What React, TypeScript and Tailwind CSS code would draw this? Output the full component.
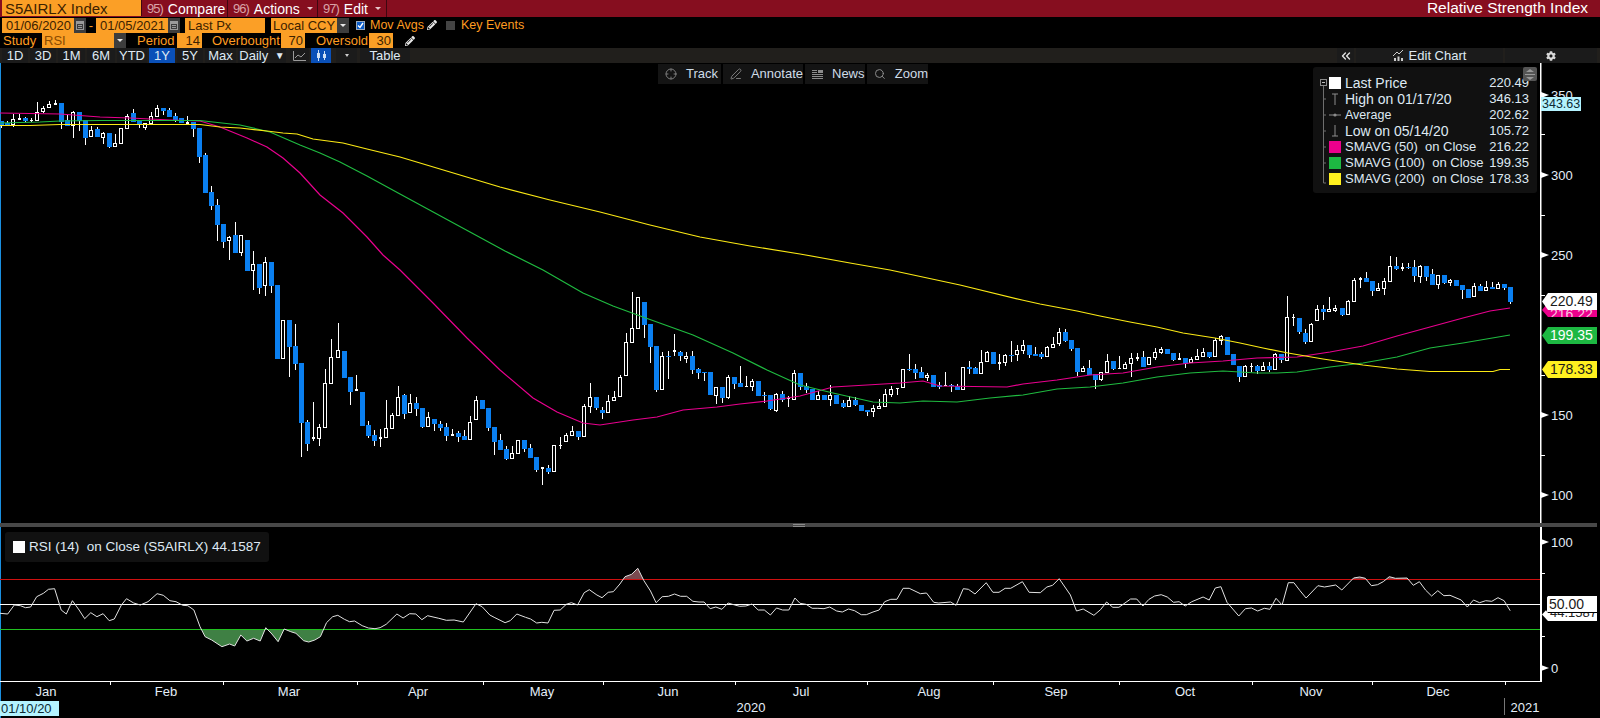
import React from "react";
import { Crosshair, Search, PenLine, ChevronsLeft } from "lucide-react";
import { FaCog, FaPencilAlt } from "react-icons/fa";

type C = number[];
const A: C[] = [[0,93,105,93,113],[0,99,105,93,105],[1,88,105,72,110],[1,84,90,72,90],[0,84,93,81,95],[1,90,92,84,96],[1,65,93,36,93],[1,54,66,48,69],[1,42,53,33,53],[1,40,45,30,45],[0,39,96,39,117],[0,90,108,75,108],[1,66,107,63,144],[0,66,93,66,123],[0,90,144,90,165],[1,120,140,108,140],[0,117,141,111,141],[1,129,144,126,162],[0,129,171,129,174],[1,160,170,132,170],[1,114,161,114,161],[1,78,116,72,116],[0,69,96,57,96],[0,93,102,93,114],[1,100,114,100,120],[1,78,102,66,102],[1,54,81,45,81],[0,54,63,54,75],[0,60,81,54,81],[0,78,93,69,96],[0,84,99,84,99],[1,96,102,78,102],[0,96,117,96,141],[0,114,201,114,219],[0,195,309,189,309],[0,306,348,288,360],[0,345,405,327,453],[0,402,456,402,474],[1,441,453,438,510],[0,435,489,396,489],[1,435,489,435,498],[0,450,543,450,543],[1,522,543,483,600],[0,522,594,522,612],[1,516,588,501,618],[0,516,588,516,609],[0,585,807,585,807],[1,690,807,690,807],[0,690,771,690,861],[0,768,822,702,840],[0,819,999,819,1100],[0,996,1062,990,1083],[1,1041,1047,936,1053],[1,1011,1047,1002,1068],[1,879,1014,837,1014],[1,801,882,747,882],[1,780,804,699,804],[0,783,864,783,864],[0,861,906,861,945],[1,897,903,855,903],[0,906,1008,906,1008],[0,1005,1038,993,1044],[0,1035,1053,1020,1068],[1,1041,1047,1017,1071],[1,1014,1044,930,1044],[1,975,1017,969,1017],[1,921,977,888,977]];
const B: C[] = [[0,375,432,372,447],[1,400,428,372,428],[0,399,417,381,438],[0,414,471,414,474],[1,442,470,426,470],[0,447,462,447,483],[0,462,474,453,483],[0,471,498,459,513],[1,492,497,477,497],[0,489,501,483,516],[0,498,510,480,510],[1,456,510,438,510],[1,390,450,378,450],[0,390,417,390,417],[0,414,474,414,483],[0,471,516,471,555],[0,510,540,492,540],[0,537,567,528,570],[1,549,567,528,567],[1,510,552,510,552],[0,510,537,510,546],[0,534,564,522,564],[0,561,600,561,606],[1,591,598,591,645],[0,594,606,585,612],[1,525,606,525,606],[1,524,528,501,537],[1,495,516,489,516],[1,484,498,468,498],[0,483,501,483,510],[1,408,501,402,501],[1,381,411,339,429],[0,381,414,381,420],[0,420,429,411,447],[1,393,429,375,429],[1,381,393,363,393],[1,321,381,315,381],[1,216,318,189,318],[1,174,219,66,219],[1,81,177,81,177],[0,96,165,96,204],[0,162,231,162,279],[0,228,360,228,366],[1,258,360,246,360],[0,258,261,243,327],[1,240,246,192,258],[0,246,258,243,273],[1,258,267,246,279],[0,258,300,243,312],[0,297,309,294,327],[0,306,309,306,333],[0,306,375,306,375],[1,351,378,351,402],[0,351,384,351,399],[1,321,384,315,387],[0,321,342,321,357],[0,339,351,288,351],[1,348,351,318,351],[1,333,351,327,363],[0,333,378,333,378],[0,375,378,366,399],[0,375,417,375,420],[1,372,423,369,426],[0,372,390,363,396],[1,384,387,378,411],[1,309,390,300,390],[0,309,351,309,360],[0,348,360,339,369],[0,357,390,357,390],[1,375,390,363,390],[0,375,390,375,390],[1,375,390,345,408],[0,375,402,375,402],[0,399,411,390,414],[1,390,411,378,411],[0,390,405,381,408],[0,405,423,405,423],[0,420,426,420,438],[1,414,426,405,441],[1,408,416,387,416],[1,372,411,357,411],[1,357,375,348,381],[1,354,358,354,375]];
const D: C[] = [[1,208,263,208,263],[0,207,210,162,213],[0,207,219,192,237],[0,216,234,201,234],[1,225,233,219,243],[0,225,261,225,261],[0,256,260,246,267],[1,255,258,216,258],[0,256,259,252,276],[0,258,270,252,270],[1,202,270,202,270],[0,201,207,183,222],[0,204,222,201,222],[1,186,222,150,222],[1,156,186,153,186],[0,156,192,156,192],[1,186,192,162,210],[1,165,189,162,198],[0,165,168,123,186],[1,150,165,135,183],[1,135,153,120,162],[0,135,165,135,174],[0,162,168,141,168],[0,162,171,156,177],[1,141,171,138,171],[1,132,143,111,143],[1,96,132,84,138],[0,96,123,87,126],[0,120,147,120,153],[0,144,216,144,228],[1,204,215,198,215],[0,204,225,180,225],[0,222,240,222,267],[1,217,240,217,243],[1,183,218,162,218],[0,183,207,183,210],[1,204,207,168,207],[1,192,207,186,207],[1,174,193,159,231],[1,171,177,159,183],[0,171,201,153,201],[1,171,195,171,195],[1,156,174,144,180],[1,147,159,141,162],[0,147,162,147,162],[0,159,180,159,183],[1,175,180,159,180],[0,174,192,174,204],[1,178,189,171,189],[1,168,180,147,180],[1,156,171,144,171],[0,156,171,156,174],[1,120,171,114,171],[1,108,123,105,135],[0,111,165,111,165],[0,162,195,162,195],[0,198,231,198,246],[1,198,231,195,231],[1,198,201,189,216],[0,198,213,195,222],[1,198,213,186,213],[0,198,210,186,216],[1,162,210,159,210],[0,162,180,162,189]];
const E: C[] = [[1,232,362,168,362],[1,231,235,222,258],[0,234,276,234,282],[0,279,306,267,312],[1,252,306,250,306],[1,207,243,195,243],[0,207,216,195,240],[1,207,216,171,216],[1,204,213,195,216],[0,204,225,204,228],[1,183,225,180,225],[1,120,186,114,186],[1,114,121,111,144],[0,114,126,96,126],[0,123,153,123,168],[1,144,152,129,152],[1,123,147,114,165],[1,78,126,48,126],[0,78,87,51,90],[1,81,88,69,93],[0,81,84,69,87],[0,81,108,60,126],[1,78,110,75,129],[0,78,111,78,123],[0,102,135,87,135],[1,105,135,105,147],[0,105,129,105,132],[1,120,129,117,138],[0,120,138,120,138],[0,135,150,135,177],[0,147,174,147,174],[1,138,170,129,171],[0,138,153,132,153],[1,141,152,123,152],[0,141,147,126,147],[1,132,147,126,147],[0,132,144,132,150],[0,141,186,141,192]];

const candles = [
  ...A.map((c) => [90, ...c]),
  ...B.map((c) => [270, ...c]),
  ...D.map((c) => [300, ...c]),
  ...E.map((c) => [240, ...c]),
].map(([o, k, bt, bb, wt, wb], i) => ({
  cx: 1.33 + 6.012 * i,
  k,
  bt: Math.round(o + bt / 3),
  bb: Math.round(o + bb / 3),
  wt: Math.round(o + wt / 3),
  wb: Math.round(o + wb / 3),
}));

const sma200 = "0,125.5 30,125.5 60,124.5 200,124.5 220,127 240,128 267,131 283,133 297,134 313,139 343,143 367,149 400,157 450,172 500,187 550,200 600,212 650,225 700,237 750,246 800,254 850,263 890,270 960,285 1022,300 1040,304 1077,311 1100,316 1130,322 1157,327 1183,333 1215,338 1240,343 1263,348 1288,353 1323,359 1363,365 1397,369 1430,371.5 1493,371.5 1500,369.5 1510,369.5";
const sma100 = "0,123 40,122 60,121 100,120.5 200,120.5 213,122 240,125 270,132 300,145 320,153 340,162 367,176 400,194 435,213 470,232 505,251 543,270 583,293 613,306 643,317 693,335 733,353 767,370 800,385 833,393 873,402 900,403 923,401 957,402 990,398 1023,395 1057,389 1090,387 1123,383 1157,377 1190,373 1223,371 1257,373 1277,373 1297,372 1330,367 1363,363 1397,357 1430,348 1463,343 1510,335";
const sma50 = "0,113 60,114 100,117 130,118 170,120 200,121 220,127 247,138 267,147 283,158 300,173 320,195 343,213 367,237 383,255 400,270 433,303 467,338 500,370 533,398 557,412 583,423 600,425 633,420 657,417 683,410 717,407 740,404 767,401 800,396 833,387 867,385 900,383 923,381 940,386 1007,387 1023,384 1057,380 1090,375 1123,373 1157,367 1190,363 1223,361 1257,358 1297,357 1330,352 1363,346 1397,336 1430,327 1463,318 1490,311 1510,308";

const r1 = [0,310,15,312,28,285,40,287,50,293,60,291,72,260,85,250,95,238,107,236,120,300,130,312,142,272,155,300,166,326,178,308,190,320,202,311,214,332,224,327,238,285,248,266,262,279,275,285,290,275,308,251,320,256,333,272,345,275,358,286,368,287,380,300,392,350,402,380,415,390,435,410,450,402,460,408,472,375,484,393,497,385,510,393,521,353,533,372,545,395,557,357,570,365,580,370,595,392,605,396,617,390,628,380,640,338,652,320,662,316,675,328,685,335,695,333,710,347,722,354,735,356,745,353,757,343,778,312,790,324,803,311,815,312,827,329,838,317,860,325,875,331,890,330,908,336,933,281,945,290,960,315,970,323,990,338,1000,332,1013,312,1030,322,1040,327,1052,339,1062,337,1074,339,1086,301,1098,300,1110,283,1120,278,1132,285,1145,248,1155,239,1170,255,1180,263,1192,247,1202,245,1215,222,1225,200,1238,193,1250,175,1262,212,1275,243,1286,278,1298,260,1310,259,1322,252,1334,259,1346,259,1358,274,1370,276,1380,276,1392,296,1403,291,1415,298,1427,279,1440,285,1450,289,1462,288,1474,282,1486,300,1498,300,1510,315,1522,294,1534,300,1546,300,1558,264];
const r2 = [0,280,12,283,24,295,35,295,47,296,58,291,72,303,83,306,95,297,107,302,120,314,130,314,143,306,155,300,166,275,178,268,190,268,202,235,214,235,236,251,248,249,262,277,272,279,295,276,306,286,320,236,330,238,343,252,365,218,378,247,390,247,402,235,413,235,436,215,449,247,471,248,484,231,495,226,508,206,530,255,542,303,555,297,576,316,589,299,601,276,613,292,625,292,648,267,660,267,672,288,684,268,695,258,708,254,720,261,732,277,743,275,755,288,768,275,790,261,802,270,814,234,825,230,837,277,860,318,873,296,885,294,897,303,910,295,921,298,933,265,945,285,957,218,968,218,980,242,992,264,1015,227,1028,231,1050,225,1062,240,1085,204,1097,201,1108,205,1120,227,1132,224,1143,215,1155,200,1167,205,1190,204,1202,226,1214,215,1226,240,1238,258,1250,242,1262,257,1274,256,1296,270,1308,291,1320,270,1332,278,1344,272,1356,274,1368,263,1380,272,1392,302];
const rsiPts: string[] = [];
for (let i = 0; i < r1.length; i += 2) rsiPts.push(`${(r1[i] / 1.96).toFixed(1)},${(510 + r1[i + 1] / 3).toFixed(1)}`);
for (let i = 0; i < r2.length; i += 2) rsiPts.push(`${(800 + r2[i] / 1.96).toFixed(1)},${(510 + r2[i + 1] / 3).toFixed(1)}`);
const rsi = rsiPts.join(" ");

const orange = "bg-[#fb9f26] text-[#3d2200]";

function Field({ className, children }: { className: string; children?: React.ReactNode }) {
  return <div className={`${orange} h-[15px] flex items-center text-[13px] leading-none whitespace-pre ${className}`}>{children}</div>;
}
function Drop({ className = "" }: { className?: string }) {
  return (
    <div className={`w-3 h-[15px] bg-[#3d3d3d] flex items-center justify-center ${className}`}>
      <div className="w-0 h-0 border-l-[3px] border-r-[3px] border-t-[3px] border-l-transparent border-r-transparent border-t-[#e8e8e8]" />
    </div>
  );
}
function Cal() {
  return (
    <div className="w-3 h-[15px] bg-[#3d3d3d] flex items-center justify-center">
      <svg width="8" height="9" viewBox="0 0 8 9"><rect x="0.5" y="0.5" width="7" height="8" fill="none" stroke="#9a9a9a" /><rect x="0" y="0" width="8" height="3" fill="#9a9a9a" /><rect x="2" y="4" width="4" height="1" fill="#9a9a9a" /><rect x="2" y="6" width="4" height="1" fill="#9a9a9a" /></svg>
    </div>
  );
}
function Btn({ className, children, on }: { className: string; children: React.ReactNode; on?: boolean }) {
  return <div className={`h-[15px] flex items-center justify-center text-[13px] leading-none text-[#dfe9f3] whitespace-pre ${on ? "bg-[#0a50b8]" : "bg-[#1b1b1b]"} ${className}`}>{children}</div>;
}
function MenuItem({ n, label, w, caret }: { n: string; label: string; w: string; caret?: boolean }) {
  return (
    <div className={`h-[17px] flex items-center pl-[5px] border-r border-[#3e0710] ${w}`}>
      <span className="text-[13px] tracking-[-1px] text-[#d9a3a8] mr-[5px]">{n}</span>
      <span className="text-[14px] leading-none text-white">{label}</span>
      {caret && <span className="ml-[7px] w-0 h-0 border-l-[3px] border-r-[3px] border-t-[3px] border-l-transparent border-r-transparent border-t-[#e8c8cc]" />}
    </div>
  );
}
function FloatBtn({ icon, label, w }: { icon: React.ReactNode; label: string; w: string }) {
  return (
    <div className={`h-5 bg-[#141414] flex items-center pl-[7px] gap-[9px] text-[13px] text-[#cfdce8] ${w}`}>
      {icon}
      <span>{label}</span>
    </div>
  );
}
function Tree({ first, last }: { first?: boolean; last?: boolean }) {
  return (
    <svg width="11" height="16" viewBox="0 0 11 16" className="shrink-0">
      <line x1="5.5" y1={first ? 8 : 0} x2="5.5" y2={last ? 12 : 16} stroke="#6e6e6e" />
      {first ? (
        <g>
          <rect x="2.5" y="4.5" width="6" height="6" fill="#111" stroke="#8a8a8a" />
          <line x1="4" y1="7.5" x2="7" y2="7.5" stroke="#bdbdbd" />
        </g>
      ) : (
        <line x1="5.5" y1={last ? 12 : 8} x2="8" y2={last ? 12 : 8} stroke="#6e6e6e" />
      )}
    </svg>
  );
}
const rows: { m: React.ReactNode; name: string; v: string; s: string }[] = [
  { m: <div className="w-3 h-3 bg-white" />, name: "Last Price", v: "220.49", s: "text-[14px]" },
  { m: <svg width="12" height="14" viewBox="0 0 12 14"><path d="M6 2V13M3 2H9" stroke="#8c8c8c" fill="none" /></svg>, name: "High on 01/17/20", v: "346.13", s: "text-[14px]" },
  { m: <svg width="12" height="14" viewBox="0 0 12 14"><path d="M0 7H12" stroke="#8c8c8c" /><circle cx="6" cy="7" r="1.6" fill="#8c8c8c" /></svg>, name: "Average", v: "202.62", s: "text-[12.5px]" },
  { m: <svg width="12" height="14" viewBox="0 0 12 14"><path d="M6 1V12M3 12H9" stroke="#8c8c8c" fill="none" /></svg>, name: "Low on 05/14/20", v: "105.72", s: "text-[14px]" },
  { m: <div className="w-3 h-3 bg-[#ec008c]" />, name: "SMAVG (50)  on Close", v: "216.22", s: "text-[13px]" },
  { m: <div className="w-3 h-3 bg-[#1db842]" />, name: "SMAVG (100)  on Close", v: "199.35", s: "text-[13px]" },
  { m: <div className="w-3 h-3 bg-[#fff01f]" />, name: "SMAVG (200)  on Close", v: "178.33", s: "text-[13px]" },
];

const clip = "[clip-path:polygon(6px_0,100%_0,100%_100%,6px_100%,0_50%)]";
const axisCls = "text-[13px] fill-[#e4eef8]";

function Axis({ y, label }: { y: number; label: string }) {
  return (
    <g>
      <polygon points={`1541,${y - 3} 1549,${y} 1541,${y + 3}`} fill="#fff" />
      <text x="1551" y={y + 5} className={axisCls}>{label}</text>
    </g>
  );
}

export default function App() {
  return (
    <div className="w-[1600px] h-[718px] bg-black flex flex-col overflow-hidden [font-family:Liberation_Sans,Arial,sans-serif]">
      {/* title bar */}
      <div className="h-[17px] bg-[#860e1f] flex pl-[2px] shrink-0">
        <div className="w-[140px] h-4 bg-[#fb9f26] text-[#3d2200] text-[15px] leading-none flex items-center pl-[3px] border-r border-[#3e0710]">S5AIRLX Index</div>
        <MenuItem n="95)" label="Compare" w="w-[86px]" />
        <MenuItem n="96)" label="Actions" w="w-[90px]" caret />
        <MenuItem n="97)" label="Edit" w="w-[69px]" caret />
        <div className="flex-1 text-right text-[15.5px] leading-[16px] text-white pr-3">Relative Strength Index</div>
      </div>
      {/* dates row */}
      <div className="h-4 flex items-center pl-[2px] shrink-0 text-[13px]">
        <Field className="w-[72px] pl-[4px]">01/06/2020</Field>
        <Cal />
        <span className="w-[10px] text-center text-[#ff9c20] leading-none">-</span>
        <Field className="w-[72px] pl-[4px]">01/05/2021</Field>
        <Cal />
        <Field className="w-[80px] ml-[5px] pl-[3px]">Last Px</Field>
        <Field className="w-[66px] ml-[6px] pl-[2px]">Local CCY</Field>
        <Drop />
        <div className="w-[9px] h-[9px] ml-[7px] bg-[#0a5cc8] border border-[#9ab] flex items-center justify-center">
          <svg width="7" height="7" viewBox="0 0 7 7"><path d="M1 3.5L3 5.5L6 1" stroke="#fff" strokeWidth="1.4" fill="none" /></svg>
        </div>
        <span className="ml-[5px] text-[#ff9c20] text-[12.5px]">Mov Avgs</span>
        <FaPencilAlt className="ml-[3px] text-[#e8e8e8] text-[10px]" />
        <div className="w-[9px] h-[9px] ml-[9px] bg-[#444]" />
        <span className="ml-[6px] text-[#ff9c20] text-[12.5px]">Key Events</span>
      </div>
      {/* study row */}
      <div className="h-[15px] flex items-center shrink-0 text-[13px] text-[#ff9c20]">
        <span className="ml-[3px] w-[39px]">Study</span>
        <Field className="w-[72px] pl-[2px] text-[#8a4a00]">RSI</Field>
        <Drop />
        <span className="ml-[11px] w-[40px]">Period</span>
        <Field className="w-[25px] justify-end pr-[2px]">14</Field>
        <span className="ml-[10px] w-[69px] whitespace-nowrap">Overbought</span>
        <Field className="w-[24px] justify-end pr-[2px]">70</Field>
        <span className="ml-[11px] w-[53px] whitespace-nowrap">Oversold</span>
        <Field className="w-[24px] justify-end pr-[2px]">30</Field>
        <FaPencilAlt className="ml-[12px] text-[#e8e8e8] text-[10px]" />
      </div>
      {/* range toolbar */}
      <div className="h-[15px] bg-[#211f1c] flex items-center pl-[2px] gap-[2px] shrink-0">
        <Btn className="w-[26px]">1D</Btn>
        <Btn className="w-[26px]">3D</Btn>
        <Btn className="w-[27px]">1M</Btn>
        <Btn className="w-[28px]">6M</Btn>
        <Btn className="w-[30px]">YTD</Btn>
        <Btn className="w-[26px]" on>1Y</Btn>
        <Btn className="w-[26px]">5Y</Btn>
        <Btn className="w-[31px]">Max</Btn>
        <Btn className="w-[48px] gap-[3px]">Daily <span className="text-[10px]">▼</span></Btn>
        <Btn className="w-[19px] ml-[2px]">
          <svg width="13" height="10" viewBox="0 0 13 10"><path d="M0.5 0V9.5H13" stroke="#9a9a9a" fill="none" /><path d="M2 7L5 4L8 6L12 2" stroke="#9a9a9a" fill="none" /></svg>
        </Btn>
        <Btn className="w-[20px]" on>
          <svg width="11" height="11" viewBox="0 0 11 11"><path d="M2.5 0V11M8.5 1V10" stroke="#cfe0f5" /><rect x="1" y="3" width="3" height="5" fill="#cfe0f5" /><rect x="7" y="4" width="3" height="4" fill="#cfe0f5" /></svg>
        </Btn>
        <Btn className="w-[21px] ml-[3px]"><span className="w-0 h-0 border-l-[2.5px] border-r-[2.5px] border-t-[3px] border-l-transparent border-r-transparent border-t-[#ccc]" /></Btn>
        <Btn className="w-[50px] ml-[1px]">Table</Btn>
        <div className="flex-1" />
        <Btn className="w-[17px]"><ChevronsLeft size={14} strokeWidth={2.4} color="#e0e0e0" /></Btn>
        <Btn className="w-[147px] gap-[5px]">
          <svg width="11" height="11" viewBox="0 0 11 11"><path d="M0 6L4 2L6 4L10 0" stroke="#ccc" fill="none" /><rect x="1" y="8" width="2" height="3" fill="#ccc" /><rect x="4.5" y="6.5" width="2" height="4.5" fill="#ccc" /><rect x="8" y="8" width="2" height="3" fill="#ccc" /></svg>
          Edit Chart
        </Btn>
        <Btn className="w-[92px] mr-[3px]"><FaCog className="text-[#d8d8d8] text-[10px]" /></Btn>
      </div>

      {/* price pane */}
      <div className="relative h-[460px] shrink-0">
        <svg width="1600" height="460" viewBox="0 63 1600 460" className="block">
          <rect x="0" y="63" width="1" height="460" fill="#1a8fe0" />
          <g shapeRendering="crispEdges">
            {candles.map((c, i) => {
              const wx = Math.round(c.cx - 0.5);
              const h = c.bb - c.bt;
              return (
                <g key={i}>
                  <rect x={wx} y={c.wt} width="1" height={Math.max(1, c.wb - c.wt)} fill="#fff" />
                  {c.k === 0 ? (
                    <rect x={wx - 2} y={c.bt} width="5" height={Math.max(1, h)} fill="#0a7ff0" />
                  ) : h <= 2 ? (
                    <rect x={wx - 1} y={c.bt} width="3" height={Math.max(1, h)} fill="#fff" />
                  ) : (
                    <rect x={wx - 1.5} y={c.bt + 0.5} width="3" height={h - 1} fill="#000" stroke="#fff" />
                  )}
                </g>
              );
            })}
          </g>
          <polyline points={sma50} fill="none" stroke="#e8008e" strokeWidth="1.2" />
          <polyline points={sma100} fill="none" stroke="#1fbb40" strokeWidth="1.2" />
          <polyline points={sma200} fill="none" stroke="#fbe914" strokeWidth="1.2" />
          <rect x="1540" y="63" width="1.5" height="460" fill="#fff" />
          <Axis y={95} label="350" />
          <Axis y={175} label="300" />
          <Axis y={255} label="250" />
          <Axis y={415} label="150" />
          <Axis y={495} label="100" />
          {[134, 215, 295, 375, 455].map((y) => (
            <rect key={y} x="1541" y={y} width="4" height="1" fill="#fff" />
          ))}
        </svg>

        {/* floating chart buttons */}
        <div className="absolute left-[658px] top-[1px] flex gap-[2px]">
          <FloatBtn w="w-[63px]" icon={<Crosshair size={12} color="#7c7c7c" />} label="Track" />
          <FloatBtn w="w-[80px]" icon={<PenLine size={12} color="#7c7c7c" />} label="Annotate" />
          <FloatBtn w="w-[60px]" icon={<svg width="11" height="11" viewBox="0 0 11 11"><path d="M0 1.5H5M0 3.5H5M0 5.5H11M0 7.5H11M0 9.5H11" stroke="#8c8c8c" /><rect x="6" y="1" width="5" height="3" fill="#8c8c8c" /></svg>} label="News" />
          <FloatBtn w="w-[61px]" icon={<Search size={12} color="#8c8c8c" />} label="Zoom" />
        </div>

        {/* legend */}
        <div className="absolute left-[1313px] top-1 w-[224px] h-[126px] bg-[#111111] rounded-[3px] pl-[5px] pr-[8px] pt-2 text-[#dfe9f3]">
          {rows.map((r, i) => (
            <div key={r.name} className="h-4 flex items-center whitespace-pre">
              <Tree first={i === 0} last={i === rows.length - 1} />
              <div className="w-3 flex justify-center shrink-0">{r.m}</div>
              <span className={`ml-[4px] flex-1 ${r.s}`}>{r.name}</span>
              <span className="text-[13px]">{r.v}</span>
            </div>
          ))}
          <div className="absolute right-0 top-0 w-[14px] h-[14px] bg-[#555] rounded-[2px] flex flex-col items-center justify-center gap-[2px]">
            <div className="w-0 h-0 border-l-[4px] border-r-[4px] border-b-[3px] border-l-transparent border-r-transparent border-b-[#999]" />
            <div className="w-[10px] h-px bg-[#999]" />
            <div className="w-0 h-0 border-l-[4px] border-r-[4px] border-t-[3px] border-l-transparent border-r-transparent border-t-[#999]" />
          </div>
        </div>

        {/* axis value tags */}
        <div className="absolute left-[1541px] top-[34px] w-10 h-[14px] bg-[#b4f3ff] text-[#0d2a33] text-[12.5px] leading-[14px] pl-px">343.63</div>
        <div className={`absolute left-[1542px] top-[240px] w-[55px] h-[14px] bg-[#ec008c] text-[#f7c8e0] text-[14px] leading-[22px] pl-2 overflow-hidden ${clip}`}>216.22</div>
        <div className={`absolute left-[1542px] top-[230px] w-[55px] h-[17px] bg-white text-[#1a1a1a] text-[14px] leading-[17px] pl-2 ${clip}`}>220.49</div>
        <div className={`absolute left-[1542px] top-[264px] w-[55px] h-[17px] bg-[#1db842] text-white text-[14px] leading-[17px] pl-2 ${clip}`}>199.35</div>
        <div className={`absolute left-[1542px] top-[298px] w-[55px] h-[17px] bg-[#fff01f] text-[#1a1a1a] text-[14px] leading-[17px] pl-2 ${clip}`}>178.33</div>
      </div>

      {/* divider */}
      <div className="h-1 bg-[#484848] mr-[3px] shrink-0 flex flex-col items-center justify-center gap-px">
        <div className="w-3 h-px bg-[#8a8a8a]" />
        <div className="w-3 h-px bg-[#8a8a8a]" />
      </div>

      {/* RSI pane */}
      <div className="relative flex-1">
        <svg width="1600" height="191" viewBox="0 527 1600 191" className="block">
          <defs>
            <clipPath id="below"><rect x="0" y="629.5" width="1540" height="60" /></clipPath>
            <clipPath id="above"><rect x="0" y="540" width="1540" height="39.5" /></clipPath>
          </defs>
          <rect x="0" y="527" width="1" height="191" fill="#1a8fe0" />
          <polygon points={`0,629.5 ${rsi} 1510,629.5`} fill="#3f8044" clipPath="url(#below)" />
          <polygon points={`0,579.5 ${rsi} 1510,579.5`} fill="#7a4a50" clipPath="url(#above)" />
          <g shapeRendering="crispEdges">
            <rect x="0" y="579" width="1541" height="1" fill="#d01010" />
            <rect x="0" y="604" width="1541" height="1" fill="#fff" />
            <rect x="0" y="629" width="1541" height="1" fill="#20c020" />
            <rect x="1540" y="527" width="1.5" height="155" fill="#fff" />
            <rect x="0" y="681" width="1541" height="1" fill="#fff" />
            {[110, 223, 357, 483, 603, 735, 867, 993, 1119, 1252, 1372, 1505].map((x) => (
              <rect key={x} x={x} y="682" width="1" height="3" fill="#fff" />
            ))}
            {[573, 636].map((y) => (
              <rect key={y} x="1541" y={y} width="4" height="1" fill="#fff" />
            ))}
            <rect x="1504" y="698" width="1" height="17" fill="#777" />
          </g>
          <polyline points={rsi} fill="none" stroke="#e2e2e2" strokeWidth="1" />
          <Axis y={542} label="100" />
          <Axis y={668} label="0" />
          {[["Jan", 46], ["Feb", 166], ["Mar", 289], ["Apr", 418], ["May", 542], ["Jun", 668], ["Jul", 801], ["Aug", 929], ["Sep", 1056], ["Oct", 1185], ["Nov", 1311], ["Dec", 1438]].map(([t, x]) => (
            <text key={t as string} x={x as number} y="696" textAnchor="middle" className={axisCls}>{t}</text>
          ))}
          <text x="751" y="712" textAnchor="middle" className={axisCls}>2020</text>
          <text x="1525" y="712" textAnchor="middle" className={axisCls}>2021</text>
        </svg>

        <div className="absolute left-[5px] top-[5px] w-[264px] h-[30px] bg-[#111111] rounded-[3px] flex items-center pl-2 text-[13.5px] text-[#dfe9f3] whitespace-pre">
          <div className="w-3 h-3 bg-white mr-1" />
          RSI (14)  on Close (S5AIRLX) 44.1587
        </div>
        <div className={`absolute left-[1542px] top-[81px] w-[55px] h-[13px] bg-white text-[#222] text-[13px] leading-[10px] pl-2 overflow-hidden ${clip}`}>44.1587</div>
        <div className={`absolute left-[1542px] top-[69px] w-[55px] h-[17px] bg-black ${clip}`}>
          <div className="ml-[5px] h-4 bg-white text-[#1a1a1a] text-[14px] leading-[16px] pl-[2px]">50.00</div>
        </div>
        <div className="absolute left-0 top-[174px] w-[59px] h-[15px] bg-[#b4f3ff] text-[#0d2a33] text-[13px] leading-[15px] pl-px">01/10/20</div>
      </div>
    </div>
  );
}
